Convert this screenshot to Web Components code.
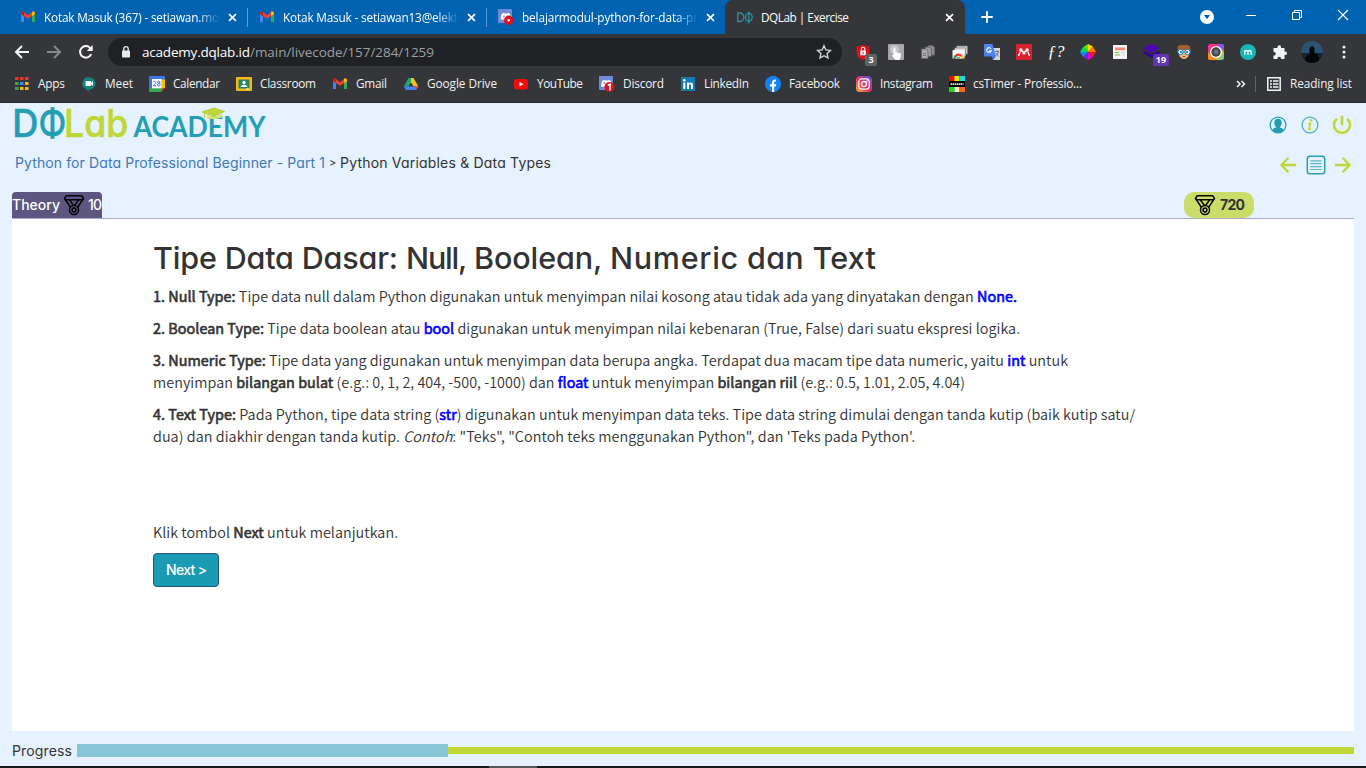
<!DOCTYPE html>
<html lang="id">
<head>
<meta charset="utf-8">
<title>DQLab | Exercise</title>
<style>
html,body{margin:0;height:100%;overflow:hidden;background:#e6f2ff}
body{font-family:Inter,"Noto Sans",sans-serif;font-feature-settings:"cv11"}
</style>
</head>
<body>
<app-window></app-window>
<script>
const ICONS = {
gmail:['0 0 16 16','<path d="M1 4v9h3V7z" fill="#4285f4"/><path d="M12 7v6h3V4z" fill="#34a853"/><path d="M1 4.2C1 2.6 2.8 2 4 3l4 3.2v3.6L1 5z" fill="#ea4335"/><path d="M8 9.8V6.200L12 3c1.200-1 3-.4 3 1.200V5z" fill="#ea4335"/><path d="M12 3c1.200-1 3-.4 3 1.200V5.200L12 7.300z" fill="#fbbc04"/><path d="M1 4.200C1 2.600 2.800 2 4 3v4.300L1 5.200z" fill="#c5221f"/>'],
discord:['0 0 16 16','<rect width="14" height="14" rx="1" fill="#7289da"/><path d="M2.500 10 3.500 5l2.200-1.200.8.700h3l.8-.7L12 5l.5 4-3 1.500H5L4 11z" fill="#fff"/><circle cx="6" cy="7.300" r=".9" fill="#7289da"/><circle cx="10.700" cy="11.300" r="4.700" fill="#e00f1b"/><circle cx="10.700" cy="11.300" r="1.300" fill="#fff"/>'],
discord1:['0 0 16 16','<rect width="14" height="14" rx="1" fill="#7289da"/><path d="M2 10 3 5l2.200-1.200.8.700h3.500l.8-.7L12 5l.5 4-3 1.500H5L4 11z" fill="#fff"/><circle cx="5.500" cy="7" r=".9" fill="#7289da"/><circle cx="10.500" cy="11" r="5" fill="#e00f1b"/><path d="M8.800 9.200 11 8.200v6.300" stroke="#fff" stroke-width="1.700" fill="none"/>'],
dq:['0 0 16 16','<path d="M.8 4v8.500H3A3.800 4.200 0 0 0 3 4zM11.800 2.500v12" fill="none" stroke="#2a93a5" stroke-width="1.300"/><ellipse cx="11.800" cy="8.300" rx="3.400" ry="4" fill="none" stroke="#2a93a5" stroke-width="1.300"/>'],
x:['0 0 16 16','<path d="M4.300 4.300l7.400 7.400M11.700 4.300l-7.400 7.400" stroke="currentColor" stroke-width="1.800"/>'],
plus:['0 0 16 16','<path d="M8 2.300v11.400M2.300 8h11.400" stroke="#fff" stroke-width="1.900"/>'],
drop:['0 0 16 16','<circle cx="8" cy="8" r="7" fill="#fff"/><path d="M4.900 6h6.200L8 10.300z" fill="#0063b1"/>'],
min:['0 0 16 16','<path d="M3 8.500h10" stroke="#fff"/>'],
restore:['0 0 16 16','<path d="M3.500 5.500h7v7h-7zM5.500 5.500v-2h7v7h-2" stroke="#fff" fill="none"/>'],
wclose:['0 0 16 16','<path d="M3 3l10 10M13 3L3 13" stroke="#fff" stroke-width="1.100"/>'],
back:['0 0 16 16','<path d="M15 8H2M8 2L2 8l6 6" stroke="currentColor" stroke-width="2" fill="none"/>'],
fwd:['0 0 16 16','<path d="M1 8h13M8 2l6 6-6 6" stroke="currentColor" stroke-width="2" fill="none"/>'],
reload:['0 0 16 16','<path d="M13.200 10.200A5.800 5.800 0 1 1 12.500 4.300" stroke="#fff" stroke-width="2" fill="none"/><path d="M14.700 1v6H8.800z" fill="#fff"/>'],
lock:['0 0 12 14','<rect x="2" y="5.500" width="8" height="7" rx=".8" fill="#e8eaed"/><path d="M3.800 6V3.800a2.200 2.200 0 0 1 4.400 0V6" fill="none" stroke="#e8eaed" stroke-width="1.400"/>'],
star:['0 0 16 16','<path d="M8 1.700l1.900 4.200 4.600.5-3.400 3.100.9 4.500-4-2.300-4 2.300.9-4.500L1.500 6.400l4.600-.5z" fill="none" stroke="#dadce0" stroke-width="1.300"/>'],
ublock:['0 0 26 24','<g transform="translate(.5 3)"><path d="M5 3.800 11.500 1.800 18 3.800V9c0 4-2.800 6.500-6.500 8C7.800 15.500 5 13 5 9z" fill="#d9121c"/><rect x="8.800" y="7.500" width="5.600" height="4.800" fill="#fff"/><path d="M9.900 7.500V6a1.700 1.700 0 0 1 3.400 0v1.500" fill="none" stroke="#fff" stroke-width="1.100"/><path d="M11.600 9v2" stroke="#d9121c"/></g>'],
hand:['0 0 16 16','<rect width="16" height="16" rx="1" fill="#a7a7a7"/><circle cx="6.500" cy="5.500" r="4.500" fill="#c8c8c8"/><path d="M5.500 4.500c0-1.400 2-1.400 2 0V8l5.500 1.500v2.700L11.500 16H7.500L3.800 11.500l1.700-.8z" fill="#fff"/>'],
copy:['0 0 16 16','<path d="M8 1.500h4.500l2 2V11H8z" fill="#8b8b8b" stroke="#666" stroke-width=".8"/><path d="M5 3h4.500l2 2v7.500H5z" fill="#999" stroke="#5c5c5c" stroke-width=".8"/><path d="M1.500 5H6l2 2v7.500H1.500z" fill="#a8a8a8" stroke="#666" stroke-width=".8"/><path d="M3 9.500h3M3 11.500h3" stroke="#777"/>'],
cast:['0 0 16 16','<path d="M4.500 2h11v8h-11z" fill="#cfcfcf" stroke="#777" stroke-width=".7"/><path d="M2.500 4h11v8h-11z" fill="#ddd" stroke="#777" stroke-width=".7"/><path d="M.5 6h12v8.500H.5z" fill="#f6f6f6"/><path d="M1.500 14.500a5 5 0 0 1 10 0z" fill="#e64034"/><path d="M1.500 14.500a5 5 0 0 1 1.500-3.500l3.500 3.500z" fill="#25a455"/><path d="M11.500 14.500a5 5 0 0 0-1.500-3.500L6.500 14.500z" fill="#fbc116"/><path d="M4 14.500a2.500 2.500 0 0 1 5 0z" fill="#fff"/><path d="M4.700 14.500a1.800 1.800 0 0 1 3.600 0z" fill="#4285f4"/>'],
translate:['0 0 16 16','<path d="M7 4h9v12H9z" fill="#d5d7db"/><path d="M0 0h8.500L12 12.500H0z" fill="#4e82ec"/><path d="M7.500 12.500H12L9 16z" fill="#3367d6"/><path d="M7 4.800A2.300 2.300 0 1 0 7.200 6.800H5.200" fill="none" stroke="#fff" stroke-width="1.200"/><path d="M11 7.500h4M13 6.500v1M14.500 7.500c-.5 2.500-1.500 3.500-3 4.500M12 9l2.800 3.500" stroke="#65758a" fill="none"/>'],
mendeley:['0 0 16 16','<rect width="16" height="16" fill="#d9202f"/><path d="M2 11.300c1.800 0 1.500-1.500 1.800-3.500M14 11.300c-1.800 0-1.500-1.500-1.800-3.500M4.500 6l3.500 2.500L11.500 6" stroke="#fff" stroke-width="1.300" fill="none"/><circle cx="8" cy="9" r="1.600" fill="#fff"/><circle cx="4.900" cy="6" r="1.700" fill="#fff"/><circle cx="11.100" cy="6" r="1.700" fill="#fff"/>'],
wheel:['0 0 16 16','<path d="M8 8V0l5 2.500z" fill="#ffd500"/><path d="M8 8l5-5.500L16 8z" fill="#ff7700"/><path d="M8 8h8l-3 5z" fill="#f11a2a"/><path d="M8 8l5 5-5 3z" fill="#ef00c8"/><path d="M8 8v8l-5-3z" fill="#6c24e8"/><path d="M8 8l-5 5-3-5z" fill="#128bf5"/><path d="M8 8H0l3-5z" fill="#00d875"/><path d="M8 8L3 3l5-3z" fill="#49e800"/>'],
news:['0 0 16 16','<rect x="1" y="1" width="14" height="14" fill="#f4f4f4"/><path d="M3 3.500h10v2.700H3z" fill="#f4857c"/><path d="M3 8.500h4M3 11h5" stroke="#77bd43"/><path d="M9.500 8.500H13M9.500 11H13" stroke="#ddd"/>'],
purple:['0 0 26 24','<g transform="translate(.5 3.500)"><path d="M12 0l7 3.500v1.200L20 5l-8 4.500-8-4 1-.7V3.500z" fill="#4b08ae"/><path d="M4 7l8 4 8-4v3l-8 4.500L4 10z" fill="#34048c"/></g>'],
face:['0 0 16 16','<path d="M2 7C0 0 5 1 8 1s7-1 6.500 6L13 9H3z" fill="#a55e24"/><path d="M3 6h10v4c0 2-2 5-5 5s-5-3-5-5z" fill="#f6b37a"/><circle cx="4.500" cy="8" r="2.700" fill="#e8f6ff" stroke="#0877b5"/><circle cx="11.500" cy="8" r="2.700" fill="#e8f6ff" stroke="#0877b5"/><circle cx="5" cy="8" r="1" fill="#125a98"/><circle cx="11" cy="8" r="1" fill="#125a98"/><path d="M6.500 12.500h3" stroke="#a34b3c"/>'],
camera:['0 0 16 16','<defs><linearGradient id="a" x2="1" y2="1"><stop stop-color="#ff2bb0"/><stop offset=".35" stop-color="#ff315d"/><stop offset=".65" stop-color="#ffb42a"/><stop offset="1" stop-color="#28dabe"/></linearGradient></defs><rect width="16" height="16" rx="2.500" fill="url(#a)"/><path d="M0 8v5.500A2.500 2.500 0 0 0 2.500 16H9z" fill="#fa8a22"/><path d="M9 0h4.500A2.500 2.500 0 0 1 16 2.500V8z" fill="#7c58e8"/><circle cx="8" cy="8" r="6" fill="#fff"/><circle cx="8" cy="8" r="4.700" fill="#41464c"/><circle cx="8" cy="8" r="2.400" fill="#68737a"/>'],
mmm:['0 0 16 16','<circle cx="8" cy="8" r="8" fill="#15b7b2"/><path d="M4.800 11V6.200M4.800 8c0-2 3.200-2 3.200 0v3M8 8c0-2 3.200-2 3.200 0v3" stroke="#fff" stroke-width="1.300" fill="none"/>'],
puzzle:['0 0 16 16','<path d="M2 4h3.500C4.700 1 9 0 9 3v1h3.500v3.500c3-.8 3.500 3.500.7 3.500h-.7v4H9c.5-3-4-3-3.500 0H1.500v-3.500c3 .5 3-4 0-3.500V4z" fill="#f1f3f4"/>'],
avatar:['0 0 22 22','<defs><clipPath id="c"><circle cx="11" cy="11" r="11"/></clipPath></defs><g clip-path="url(#c)"><path d="M0 0h22v22H0z" fill="#2d5372"/><path d="M0 12h22v10H0z" fill="#152330"/><path d="M4 22c0-7 2-8 5-9-3-9 6-11 4.500-1 4 1 5 4 5 10z" fill="#050709"/></g>'],
dots:['0 0 16 16','<circle cx="8" cy="3" r="1.500" fill="#f1f3f4"/><circle cx="8" cy="8" r="1.500" fill="#f1f3f4"/><circle cx="8" cy="13" r="1.500" fill="#f1f3f4"/>'],
apps:['0 0 16 16','<path d="M1 1h3.500v3H1zM6 1h3.500v3H6zM11 1h3.500v3H11z" fill="#e9362c"/><path d="M1 6h3.500v3H1z" fill="#35a852"/><path d="M6 6h3.500v3H6z" fill="#4285f4"/><path d="M11 6h3.500v3H11zM6 11h3.500v3H6zM11 11h3.500v3H11z" fill="#f9b916"/><path d="M1 11h3.500v3H1z" fill="#35a852"/>'],
meet:['0 0 16 16','<path d="M8 1.300a6.300 6 0 0 1 0 12.400l-.5 2-2-2.400A6.300 6.200 0 0 1 8 1.300z" fill="#10877a"/><rect x="4.500" y="5" width="5.500" height="5" rx=".8" fill="#fff"/><path d="M9 7.500L12 5v5z" fill="#fff"/>'],
calendar:['0 0 16 16','<path d="M0 1a1 1 0 0 1 1-1h14a1 1 0 0 1 1 1v3h-4V3H0z" fill="#3b78e7"/><path d="M0 2h3v10H0z" fill="#3b78e7"/><path d="M0 12h12v4H1a1 1 0 0 1-1-1z" fill="#34a853"/><path d="M12.500 3.500H16V12h-3.500z" fill="#fbbc04"/><path d="M12 12h4l-4 4z" fill="#ea4335"/><path d="M3 3h9.700v9.300H3z" fill="#fff"/><path d="M4.200 6.200c.3-1.200 2.700-1.200 2.500.4-.2 1-1.500 1.800-2.500 3.200H7" fill="none" stroke="#3976df"/><ellipse cx="9.800" cy="6.200" rx="1.200" ry="1.100" fill="none" stroke="#3976df"/><ellipse cx="9.800" cy="8.700" rx="1.400" ry="1.200" fill="none" stroke="#3976df"/>'],
classroom:['0 0 16 16','<rect y="1" width="16" height="14" rx="1" fill="#f5ba15"/><path d="M2.500 3.500h11v9h-11z" fill="#25875a"/><circle cx="8" cy="6.500" r="1.700" fill="#fff"/><path d="M4.500 11c.5-3 6.500-3 7 0z" fill="#fff"/><path d="M10 12.500h3v1h-3z" fill="#fff"/>'],
drive:['0 0 16 16','<path d="M5.500 2H8v4.300L5.500 10.500H.8z" fill="#22a768"/><path d="M8 2h2.500l4.900 8.500h-4.700L8 6.300z" fill="#fbc116"/><path d="M.8 10.500h14.600L13 14H3z" fill="#4285f4"/><path d="M11 10.500h4.400L13 14z" fill="#ea4335"/>'],
youtube:['0 0 16 16','<rect x="1" y="3" width="14" height="10.500" rx="2.500" fill="#f20d0d"/><path d="M6.500 6v4.500l4-2.250z" fill="#fff"/>'],
linkedin:['0 0 16 16','<rect x="1" y="1" width="14" height="14" fill="#1379b9"/><path d="M3.300 6.500h2V13h-2zM7 6.500h2v1c1-1.700 4-1.500 4 1.500v4h-2V9.500c0-1.800-2-1.500-2 0V13H7z" fill="#fff"/><circle cx="4.300" cy="4.300" r="1.200" fill="#fff"/>'],
facebook:['0 0 16 16','<circle cx="8" cy="8" r="8" fill="#1185f5"/><path d="M7 16v-5.500H5V8.200h2V6.500C7 4 8.500 3 11 3.500v2C9.500 5.300 9.200 5.700 9.200 6.700v1.500h2l-.4 2.300H9.200V16z" fill="#fff"/>'],
instagram:['0 0 16 16','<defs><linearGradient id="i" x1="0" y1="1" x2="1" y2="0"><stop stop-color="#fdb544"/><stop offset=".45" stop-color="#ef2f62"/><stop offset="1" stop-color="#5851db"/></linearGradient></defs><rect width="16" height="16" rx="4" fill="url(#i)"/><rect x="2.800" y="2.800" width="10.400" height="10.400" rx="3" fill="none" stroke="#fff" stroke-width="1.200"/><circle cx="8" cy="8" r="2.500" fill="none" stroke="#fff" stroke-width="1.300"/><circle cx="11" cy="5" r=".8" fill="#fff"/>'],
cstimer:['0 0 16 16','<path d="M0 0h16v16H0z"/><path d="M0 0h5.300v5H0z" fill="#f10808"/><path d="M5.300 0h5.300v5H5.300z" fill="#ffe600"/><path d="M10.600 0H16v5h-5.400z" fill="#21d9e0"/><path d="M0 11h5.300v5H0z" fill="#0be60b"/><path d="M5.300 11h5.300v5H5.300z" fill="#f0f0c8"/><path d="M10.600 11H16v5h-5.400z" fill="#f76a19"/><path d="M1.500 8.200h13" stroke="#ddd" stroke-width="1.800" stroke-dasharray="1.500 .5"/>'],
reading:['0 0 16 16','<path d="M1.800 1.800h12.400v12.400H1.800z" fill="none" stroke="#f1f3f4" stroke-width="1.500"/><path d="M4 5h2M4 8h2M4 11h2M7 5h5.500M7 8h5.500M7 11h5.500" stroke="#f1f3f4" stroke-width="1.500"/>'],
more:['0 0 16 16','<path d="M4 5l3 3-3 3M8.500 5l3 3-3 3" fill="none" stroke="#f1f3f4" stroke-width="1.500"/>'],
medal:['0 0 22 22','<g fill="none" stroke="#050505" stroke-width="1.500" stroke-linejoin="round"><path d="M3.300 1.700h15.400l1.800 2.800-1 1.300H2.500l-1-1.300z"/><path d="M2 5.200l5.500 8.300M6.300 5.800l4 5.500M20 5.200l-5.500 8.300M15.700 5.800l-4 5.500"/><circle cx="11" cy="16" r="4.500"/><circle cx="11" cy="16" r="1.900"/></g>'],
user:['0 0 20 20','<circle cx="10" cy="10" r="7.900" fill="none" stroke="#259eb5" stroke-width="1.300"/><path d="M4.300 15.300c.3-1.900 1.800-2.200 3.700-2.800h4c1.900.6 3.400.9 3.700 2.800-3 3.200-8.400 3.200-11.400 0z" fill="#259eb5"/><ellipse cx="10" cy="8" rx="3.700" ry="4.200" fill="#259eb5"/><path d="M8 11h4v3H8z" fill="#259eb5"/>'],
info:['0 0 20 20','<circle cx="10" cy="10" r="7.900" fill="none" stroke="#4bb1c3" stroke-width="1.300"/><path d="M8.300 8.500h2L9 14.300h2.200" fill="none" stroke="#bfd837" stroke-width="1.900"/><circle cx="11" cy="5.300" r="1.300" fill="#bfd837"/>'],
power:['0 0 20 20','<path d="M10 .7v9.500M5 3.700a8 8 0 1 0 10 0" fill="none" stroke="#bfd837" stroke-width="2.600"/>'],
left:['0 0 20 20','<path d="M19 10H3M10.500 2L2.700 10l7.800 8" fill="none" stroke="#bfd837" stroke-width="2.600"/>'],
right:['0 0 20 20','<path d="M1 10h16M9.500 2l7.800 8-7.800 8" fill="none" stroke="#bfd837" stroke-width="2.600"/>'],
list:['0 0 20 20','<rect x="1.300" y="1.300" width="17.400" height="17.400" rx="2.500" fill="none" stroke="#2b9fb5" stroke-width="1.500"/><path d="M4.300 5.800h11.400M4.300 8.700h11.400M4.300 11.600h11.400M4.300 14.500h11.400" stroke="#5bb7c8" stroke-width="1.200"/>']
};
class Base extends HTMLElement{
  connectedCallback(){ if(this.shadowRoot) return; this.attachShadow({mode:'open'}).innerHTML=this.render(); this.ready?.(); }
}
const def=(n,render,ready)=>customElements.define(n,class extends Base{ render(){return render(this)} ready(){ready?.(this)} });

def('ui-icon',e=>{const[v,p]=ICONS[e.getAttribute('name')];const s=e.getAttribute('size')||16;const h=e.getAttribute('h')||s;
return `<style>:host{display:block;flex:none;width:${s}px;height:${h}px}svg{display:block;width:100%;height:100%;overflow:visible}</style><svg viewBox="${v}">${p}</svg>`});

/* One line of text whose tracking is adjusted so that it fills the width in "w". */
def('fit-line',e=>`<style>:host{display:block;flex:none;white-space:pre;width:${e.getAttribute('w')}px}span{display:inline-block}</style><span><slot></slot></span>`,
e=>{const s=e.shadowRoot.querySelector('span');const d=+e.getAttribute('w')-s.getBoundingClientRect().width;s.style.letterSpacing=(d/Math.max(1,e.textContent.length-1)).toFixed(3)+'px';});

def('browser-tab',e=>`<style>:host{display:flex;box-sizing:border-box;align-items:center;width:239px;height:34px;padding-left:11px;color:#fff;position:relative;font:11.800px "Open Sans",sans-serif}
:host([active]){background:#35363a;border-radius:8px 8px 0 0;margin-left:-1px;width:240px;padding-left:12px}
:host([sep])::after{content:"";position:absolute;right:0;top:8px;width:1px;height:19px;background:#5e9bd0}
.t{width:176px;margin:-1px 5px 0 8px;overflow:hidden;line-height:18px}
:host(:not([active])) .t{-webkit-mask:linear-gradient(90deg,#000 87%,transparent)}</style>
<ui-icon name="${e.getAttribute('icon')}"></ui-icon><div class="t"><fit-line w="${e.getAttribute('w')}">${e.getAttribute('label')}</fit-line></div><ui-icon name="x" size="15"></ui-icon>`);

def('tab-strip',()=>`<style>:host{display:flex;height:34px;background:#0063b1;padding-left:9px;align-items:center}.win{display:flex;margin-left:auto;gap:30px;padding-right:15px}ui-icon{margin-top:-3px}.plus{margin:0 0 0 14px}.win .drop{margin-right:-2px;margin-top:-1px}</style>
<browser-tab sep icon="gmail" w="175" label="Kotak Masuk (367) - setiawan.mo"></browser-tab>
<browser-tab sep icon="gmail" w="175" label="Kotak Masuk - setiawan13@elekt"></browser-tab>
<browser-tab icon="discord" w="176" label="belajarmodul-python-for-data-pr"></browser-tab>
<browser-tab active icon="dq" w="88" label="DQLab | Exercise"></browser-tab>
<ui-icon class="plus" name="plus"></ui-icon>
<div class="win"><ui-icon class="drop" name="drop"></ui-icon><ui-icon name="min"></ui-icon><ui-icon name="restore"></ui-icon><ui-icon name="wclose"></ui-icon></div>`);

def('ext-cell',e=>`<style>:host{display:grid;place-items:center;width:32px;height:36px;position:relative}
b{position:absolute;left:17px;top:20px;min-width:12px;height:12px;border-radius:2px;font:bold 9px/12px "Open Sans",sans-serif;color:#fff;text-align:center;background:${e.getAttribute('bg')||'#5f6368'};padding:0 ${e.getAttribute('badge')?.length>1?2:0}px}
i{font:italic 17px/20px "Liberation Serif",serif;color:#fff}</style>
${e.hasAttribute('fn')?'<i>ƒ?</i>':`<ui-icon name="${e.getAttribute('icon')}" size="${e.getAttribute('size')||16}" h="${e.getAttribute('h')||e.getAttribute('size')||16}"></ui-icon>`}${e.hasAttribute('badge')?`<b>${e.getAttribute('badge')}</b>`:''}`);

def('tool-bar',()=>`<style>:host{display:flex;box-sizing:border-box;height:36px;background:#35363a;align-items:center;padding-left:14px;color:#f1f3f4}
.fwd{color:#87888b}.nav{display:flex;gap:16px;width:94px}
.omni{display:flex;box-sizing:border-box;align-items:center;width:734px;height:28px;border-radius:14px;background:#202124;padding:0 10px 0 12px;font:13.500px/20px "Open Sans",sans-serif;color:#9aa0a6}
.omni .host{color:#fff;margin-left:10px}.star{margin-left:auto}.ext{display:flex;margin-left:6px}</style>
<div class="nav"><ui-icon name="back"></ui-icon><ui-icon class="fwd" name="fwd"></ui-icon><ui-icon name="reload"></ui-icon></div>
<div class="omni"><ui-icon name="lock" size="12" h="14"></ui-icon><fit-line class="host" w="108">academy.dqlab.id</fit-line><fit-line w="184">/main/livecode/157/284/1259</fit-line><ui-icon class="star" name="star"></ui-icon></div>
<div class="ext"><ext-cell icon="ublock" size="26" h="24" badge="3"></ext-cell><ext-cell icon="hand"></ext-cell><ext-cell icon="copy"></ext-cell><ext-cell icon="cast"></ext-cell><ext-cell icon="translate"></ext-cell><ext-cell icon="mendeley"></ext-cell><ext-cell fn></ext-cell><ext-cell icon="wheel"></ext-cell><ext-cell icon="news"></ext-cell><ext-cell icon="purple" size="26" h="24" badge="19" bg="#6434b8"></ext-cell><ext-cell icon="face"></ext-cell><ext-cell icon="camera"></ext-cell><ext-cell icon="mmm"></ext-cell><ext-cell icon="puzzle"></ext-cell><ext-cell icon="avatar" size="22"></ext-cell><ext-cell icon="dots"></ext-cell></div>`);

def('book-mark',e=>`<style>:host{display:flex;align-items:center;gap:8px;color:#f1f3f4;font:11.800px/18px "Open Sans",sans-serif}fit-line{margin-top:-2px}</style><ui-icon name="${e.getAttribute('icon')}"></ui-icon><fit-line w="${e.getAttribute('w')}">${e.getAttribute('label')}</fit-line>`);

const MARKS=[['apps','Apps',27],['meet','Meet',28],['calendar','Calendar',47],['classroom','Classroom',56],['gmail','Gmail',31],['drive','Google Drive',70],['youtube','YouTube',46],['discord1','Discord',41],['linkedin','LinkedIn',45],['facebook','Facebook',51],['instagram','Instagram',53],['cstimer','csTimer - Professio...',109]];
def('bookmark-bar',()=>`<style>:host{display:flex;box-sizing:border-box;height:33px;padding:0 14px 4px;background:#35363a;border-bottom:1px solid #292a2d;align-items:center;gap:16px}.more{margin-left:auto}.r{display:flex;align-items:center;border-left:1px solid #606164;height:16px;padding-left:10px;margin-left:-10px}</style>
${MARKS.map(([i,l,w])=>`<book-mark icon="${i}" label="${l}" w="${w}"></book-mark>`).join('')}<ui-icon class="more" name="more"></ui-icon><div class="r"><book-mark icon="reading" label="Reading list" w="62"></book-mark></div>`);

def('brand-logo',()=>`<style>:host{display:block;width:254px;height:36px}svg{display:block;overflow:visible}text{font-family:Inter,sans-serif;font-feature-settings:"cv11"}</style>
<svg width="254" height="36" viewBox="12 107 254 36"><g font-size="38.500" font-weight="500" stroke-width=".6"><text transform="translate(12.300 137) scale(.94 1)" fill="#259eb5" stroke="#259eb5">D</text><text transform="translate(38.800 137) scale(.8 1)" fill="#259eb5" stroke="#259eb5">Φ</text><text transform="translate(64 137) scale(.925 1)" fill="#bfd837" stroke="#bfd837">Lab</text></g>
<text x="133.500" y="137.300" fill="#259eb5" style="font-family:Lato,sans-serif" font-size="28.500" font-weight="700" textLength="132" lengthAdjust="spacingAndGlyphs">ACADEMY</text>
<path d="M202 112l12-4 10.500 3.500-10.500 4.500z" fill="#bfd837" stroke="#a5bf25" stroke-width=".7"/><path d="M207 114.500v3.500c3 1.500 12 1.500 15-1v-3.500l-8 3z" fill="#d4e56d"/><path d="M204.500 112.500v5.500" stroke="#bfd837" stroke-width="1.300"/></svg>`);

def('page-header',()=>`<style>:host{display:grid;grid-template-columns:1fr auto;padding:3px 14px 0 12px;height:86px;box-sizing:border-box;grid-template-rows:38px 38px;align-items:center;font:14px/20px Inter,sans-serif;font-feature-settings:"cv11"}
.crumb{display:flex;padding-left:3px;color:#333}.crumb .a{color:#4078b8;margin-right:4px}.crumb .g{font-size:11px;margin-right:4px}
.ic,.nv{display:flex;align-items:center;justify-content:flex-end}.ic{gap:12px;margin-top:-1px}.nv{gap:8.500px;margin-top:3px}</style>
<brand-logo></brand-logo><div class="ic"><ui-icon name="user" size="20"></ui-icon><ui-icon name="info" size="20"></ui-icon><ui-icon name="power" size="20"></ui-icon></div>
<div class="crumb"><fit-line class="a" w="310">Python for Data Professional Beginner - Part 1</fit-line><fit-line class="g" w="7">&gt;</fit-line><fit-line w="211">Python Variables &amp; Data Types</fit-line></div>
<div class="nv"><ui-icon name="left" size="18"></ui-icon><ui-icon name="list" size="20"></ui-icon><ui-icon name="right" size="18"></ui-icon></div>`);

def('score-row',()=>`<style>:host{display:flex;justify-content:space-between;height:26px;margin:3px 112px 0 12px;font:500 14px/26px Inter,sans-serif}
.t,.s{display:flex;align-items:center;box-sizing:border-box;height:26px}.t{background:#5c5680;color:#fff;width:90px;border-radius:4px 4px 0 0;gap:3px}.s{background:#cbdd69;color:#333;font-weight:700;width:70px;border-radius:10px;padding-left:10px;gap:4px}</style>
<div class="t"><fit-line w="48">Theory</fit-line><ui-icon name="medal" size="22"></ui-icon><fit-line w="14">10</fit-line></div><div class="s"><ui-icon name="medal" size="22"></ui-icon><fit-line w="25">720</fit-line></div>`);

def('lesson-body',()=>`<style>:host{display:block;box-sizing:border-box;height:513px;margin:0 12px;background:#fff;border-top:1px solid #abaac8;padding:22px 141px 0;color:#333;font:350 14.400px/22px "Noto Sans CJK JP","Noto Sans",sans-serif}
h1{display:flex;margin:0 0 10px;font:500 30.500px/34px Inter,sans-serif;font-feature-settings:"cv11"}p{margin:0 0 10px}b{font-weight:400;-webkit-text-stroke:.6px}.k{color:#00f}.last{margin-top:74px}
button{display:block;box-sizing:border-box;width:66px;height:34px;margin:0;border:1px solid #245580;border-radius:4px;background:#1b9ab4;color:#fff;padding:0 0 0 12px;text-align:left;font:500 14px/20px Inter,sans-serif}</style>
<h1><fit-line w="253">Tipe Data Dasar: </fit-line><fit-line w="68">Null, </fit-line><fit-line w="136">Boolean, </fit-line><fit-line w="137">Numeric </fit-line><fit-line w="129">dan Text</fit-line></h1>
<p><fit-line w="864"><b>1. Null Type:</b> Tipe data null dalam Python digunakan untuk menyimpan nilai kosong atau tidak ada yang dinyatakan dengan <b class="k">None.</b></fit-line></p>
<p><fit-line w="867"><b>2. Boolean Type:</b> Tipe data boolean atau <b class="k">bool</b> digunakan untuk menyimpan nilai kebenaran (True, False) dari suatu ekspresi logika.</fit-line></p>
<p><fit-line w="915"><b>3. Numeric Type:</b> Tipe data yang digunakan untuk menyimpan data berupa angka. Terdapat dua macam tipe data numeric, yaitu <b class="k">int</b> untuk</fit-line><fit-line w="812">menyimpan <b>bilangan bulat</b> (e.g.: 0, 1, 2, 404, -500, -1000) dan <b class="k">float</b> untuk menyimpan <b>bilangan riil</b> (e.g.: 0.5, 1.01, 2.05, 4.04)</fit-line></p>
<p><fit-line w="982"><b>4. Text Type:</b> Pada Python, tipe data string (<b class="k">str</b>) digunakan untuk menyimpan data teks. Tipe data string dimulai dengan tanda kutip (baik kutip satu/</fit-line><fit-line w="762">dua) dan diakhir dengan tanda kutip. <i>Contoh</i>: "Teks", "Contoh teks menggunakan Python", dan 'Teks pada Python'.</fit-line></p>
<p class="last"><fit-line w="245">Klik tombol <b>Next</b> untuk melanjutkan.</fit-line></p>
<button><fit-line w="41">Next &gt;</fit-line></button>`);

def('progress-row',()=>`<style>:host{display:flex;box-sizing:border-box;height:35px;padding:0 12px 0 12px;color:#333;font:14px/20px Inter,sans-serif;align-items:center}
:host>*{margin-top:4px}.b{display:flex;align-items:center;flex:1;height:13px;margin-left:5px}.d{width:371px;height:13px;background:#86c6d8}.l{flex:1;height:7px;background:#bfd837}</style>
<fit-line w="60">Progress</fit-line><div class="b"><div class="d"></div><div class="l"></div></div>`);

def('app-window',()=>`<style>:host{display:flex;flex-direction:column;width:1366px;height:768px;background:#e6f2ff;overflow:hidden}:host>*{flex:none}.task{height:2px;background:linear-gradient(90deg,#15181c 489px,#55585c 489px 537px,#15181c 537px)}</style>
<tab-strip></tab-strip><tool-bar></tool-bar><bookmark-bar></bookmark-bar><page-header></page-header><score-row></score-row><lesson-body></lesson-body><progress-row></progress-row><div class="task"></div>`);
</script>
</body>
</html>
